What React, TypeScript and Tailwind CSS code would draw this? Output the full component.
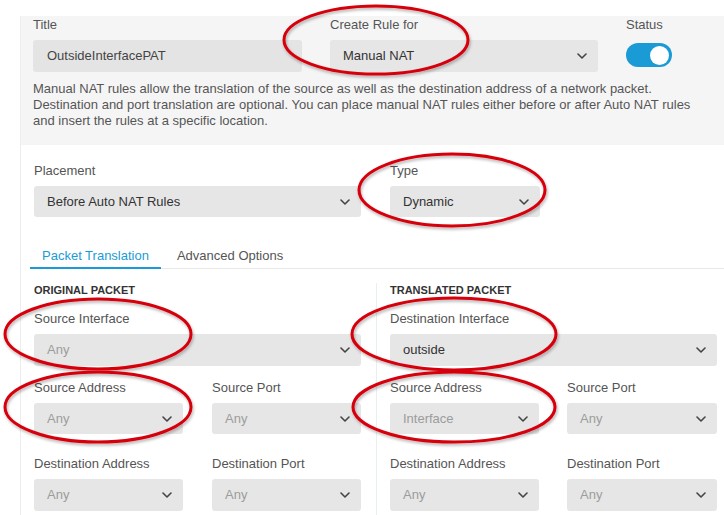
import React from 'react';

const Chevron = () => (
  <svg width="10" height="6" viewBox="0 0 10 6" fill="none" className="shrink-0">
    <path d="M1 1l4 4 4-4" stroke="#444" strokeWidth="1.6" strokeLinecap="round" strokeLinejoin="round" />
  </svg>
);

function Select({
  value,
  width,
  muted,
  height = 'h-[32px]',
}: {
  value: string;
  width: string;
  muted?: boolean;
  height?: string;
}) {
  return (
    <div
      className={`${width} ${height} mt-[7px] flex items-center justify-between rounded-[3px] bg-[#e6e6e6] pl-[13px] pr-[11px] text-[13px] ${
        muted ? 'text-[#9c9c9c]' : 'text-[#333]'
      }`}
    >
      <span>{value}</span>
      <Chevron />
    </div>
  );
}

const Label = ({ children, className = '' }: { children: React.ReactNode; className?: string }) => (
  <div className={`text-[13px] leading-4 text-[#555] ${className}`}>{children}</div>
);

export default function App() {
  return (
    <div
      className="relative h-[515px] w-[724px] overflow-hidden bg-white pt-[16px]"
      style={{ fontFamily: '"Liberation Sans", Arial, sans-serif' }}
    >
      <div className="ml-[20px] h-full border-l border-[#ededed]">
        {/* rule header */}
        <div className="bg-[#f5f5f5] pb-[16px] pl-[12px] pt-px">
          <div className="flex gap-[28px]">
            <div>
              <Label>Title</Label>
              <div className="mt-[7px] flex h-[32px] w-[269px] items-center rounded-[3px] bg-[#e4e4e4] pl-[14px] text-[13px] text-[#444]">
                OutsideInterfacePAT
              </div>
            </div>
            <div>
              <Label>Create Rule for</Label>
              <Select value="Manual NAT" width="w-[268px]" />
            </div>
            <div>
              <Label>Status</Label>
              <div className="mt-[10px] flex h-[24px] w-[46px] items-center justify-end rounded-full bg-[#1b9bd6] pr-[3px]">
                <div className="h-[19px] w-[19px] rounded-full bg-white" />
              </div>
            </div>
          </div>
          <p className="mt-[9px] text-[13px] leading-4 text-[#555]">
            Manual NAT rules allow the translation of the source as well as the destination address of a network packet.
            <br />
            Destination and port translation are optional. You can place manual NAT rules either before or after Auto NAT rules
            <br />
            and insert the rules at a specific location.
          </p>
        </div>

        {/* placement / type */}
        <div className="mt-[18px] flex gap-[29px] pl-[13px]">
          <div>
            <Label>Placement</Label>
            <Select value="Before Auto NAT Rules" width="w-[327px]" height="h-[31px]" />
          </div>
          <div>
            <Label>Type</Label>
            <Select value="Dynamic" width="w-[150px]" height="h-[31px]" />
          </div>
        </div>

        {/* tabs */}
        <div className="ml-[9px] mt-[23px] flex border-b border-[#e8e8e8] text-[13px]">
          <div className="-mb-px border-b-2 border-[#1b9bd6] px-3 pb-[3px] pt-2 leading-4 text-[#1b9bd6]">
            Packet Translation
          </div>
          <div className="px-4 pb-[3px] pt-2 leading-4 text-[#555]">Advanced Options</div>
        </div>

        {/* packet columns */}
        <div className="mt-[14px] flex">
          <div className="w-[355px] pl-[13px]">
            <div className="text-[11px] font-bold leading-[14px] text-[#333]">ORIGINAL PACKET</div>
            <Label className="mt-[14px]">Source Interface</Label>
            <Select value="Any" width="w-[327px]" muted />
            <div className="mt-[14px] flex gap-[29px]">
              <div>
                <Label>Source Address</Label>
                <Select value="Any" width="w-[149px]" height="h-[31px]" muted />
              </div>
              <div>
                <Label>Source Port</Label>
                <Select value="Any" width="w-[149px]" height="h-[31px]" muted />
              </div>
            </div>
            <div className="mt-[22px] flex gap-[29px]">
              <div>
                <Label>Destination Address</Label>
                <Select value="Any" width="w-[149px]" muted />
              </div>
              <div>
                <Label>Destination Port</Label>
                <Select value="Any" width="w-[149px]" muted />
              </div>
            </div>
          </div>
          <div className="h-[240px] border-l border-[#e8eef2] pl-[13px]">
            <div className="text-[11px] font-bold leading-[14px] text-[#333]">TRANSLATED PACKET</div>
            <Label className="mt-[14px]">Destination Interface</Label>
            <Select value="outside" width="w-[327px]" />
            <div className="mt-[14px] flex gap-[28px]">
              <div>
                <Label>Source Address</Label>
                <Select value="Interface" width="w-[149px]" height="h-[31px]" muted />
              </div>
              <div>
                <Label>Source Port</Label>
                <Select value="Any" width="w-[150px]" height="h-[31px]" muted />
              </div>
            </div>
            <div className="mt-[22px] flex gap-[28px]">
              <div>
                <Label>Destination Address</Label>
                <Select value="Any" width="w-[149px]" muted />
              </div>
              <div>
                <Label>Destination Port</Label>
                <Select value="Any" width="w-[150px]" muted />
              </div>
            </div>
          </div>
        </div>
      </div>

      {/* red annotation ellipses drawn over the form */}
      <svg className="pointer-events-none absolute left-0 top-0" width="724" height="515" viewBox="0 0 724 515">
        <defs>
          <filter id="sh" x="-10%" y="-20%" width="120%" height="140%">
            <feDropShadow dx="1" dy="2" stdDeviation="1.5" floodColor="#000" floodOpacity="0.3" />
          </filter>
        </defs>
        <g fill="none" stroke="#d6000c" strokeWidth="3" filter="url(#sh)">
          <ellipse cx="376" cy="40" rx="92" ry="34" />
          <ellipse cx="452" cy="190" rx="93" ry="36" />
          <ellipse cx="98" cy="334" rx="93" ry="35" />
          <ellipse cx="454" cy="334" rx="102" ry="36" />
          <ellipse cx="98" cy="407" rx="93" ry="35" />
          <ellipse cx="454" cy="407" rx="101" ry="35" />
        </g>
      </svg>
    </div>
  );
}
